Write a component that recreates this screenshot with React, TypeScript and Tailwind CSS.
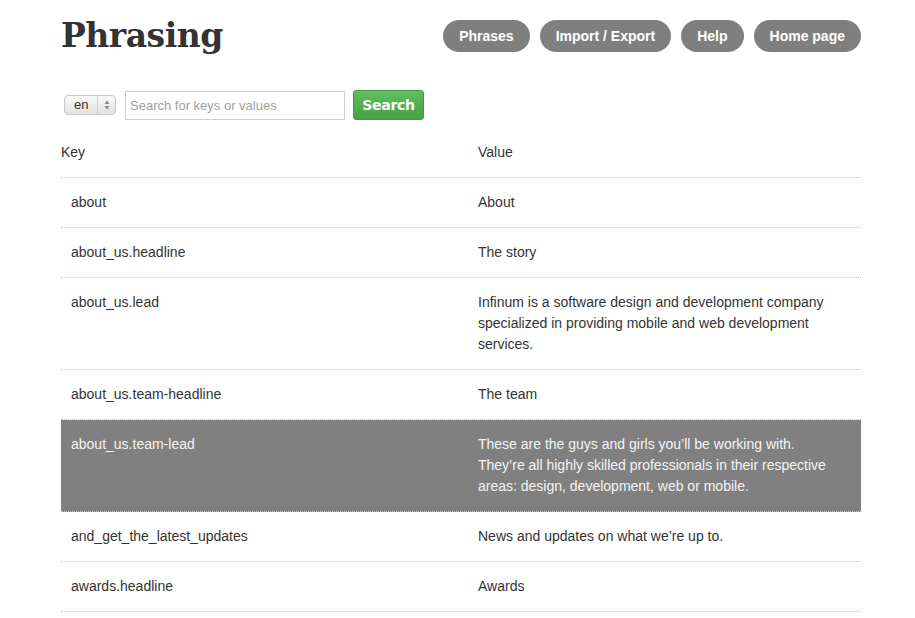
const navItems = ["Phrases", "Import / Export", "Help", "Home page"];

interface Phrase {
  key: string;
  value: string;
  active?: boolean;
}

const phrases: Phrase[] = [
  { key: "about", value: "About" },
  { key: "about_us.headline", value: "The story" },
  {
    key: "about_us.lead",
    value:
      "Infinum is a software design and development company specialized in providing mobile and web development services.",
  },
  { key: "about_us.team-headline", value: "The team" },
  {
    key: "about_us.team-lead",
    value:
      "These are the guys and girls you\u2019ll be working with. They\u2019re all highly skilled professionals in their respective areas: design, development, web or mobile.",
    active: true,
  },
  { key: "and_get_the_latest_updates", value: "News and updates on what we\u2019re up to." },
  { key: "awards.headline", value: "Awards" },
];

const PhraseRow = ({ phrase }: { phrase: Phrase }) => {
  return (
    <div
      className={`flex border-b border-dotted border-[#c4c4c4] py-[14px] text-[14px] leading-[21px] ${
        phrase.active ? "bg-[#808080] text-[#f4f4f4]" : "text-[#333]"
      }`}
    >
      <div className="w-[407px] pl-[10px]">{phrase.key}</div>
      <div className="w-[370px] pl-[10px]">{phrase.value}</div>
    </div>
  );
};

export default function App() {
  return (
    <div className="min-h-[618px] bg-white font-['Liberation_Sans',Arial,sans-serif]">
      <div className="ml-[61px] w-[800px]">
        {/* Header */}
        <header className="flex items-center justify-between pt-[14px]">
          <h1 className="font-['DejaVu_Serif',Georgia,serif] text-[33px] font-bold leading-[44px] tracking-[-0.5px] text-[#333]">
            Phrasing
          </h1>
          <nav className="flex gap-[10px]">
            {navItems.map((item) => (
              <a
                key={item}
                className="flex h-[32px] items-center rounded-full bg-[#7f7f7f] px-[16px] text-[14px] font-bold text-white"
              >
                {item}
              </a>
            ))}
          </nav>
        </header>

        {/* Search */}
        <div className="mt-[32px] flex items-center">
          <div className="ml-[3px] flex h-[20px] w-[52px] items-center rounded-[4px] border border-[#c8c8c8] bg-gradient-to-b from-[#f8f8f8] to-[#e2e2e2] text-[13px] text-[#333]">
            <span className="flex-1 pl-[9px]">en</span>
            <span className="flex h-full w-[18px] items-center justify-center border-l border-[#d0d0d0]">
              <svg width="6" height="10" viewBox="0 0 6 10">
                <path d="M3 0.5L5.5 4H0.5z" fill="#888" />
                <path d="M3 9.5L5.5 6H0.5z" fill="#888" />
              </svg>
            </span>
          </div>
          <input
            className="ml-[9px] h-[29px] w-[220px] border border-[#cfcfcf] px-[4px] text-[13px] text-[#333] placeholder:text-[#a0a0a0] focus:outline-none"
            placeholder="Search for keys or values"
          />
          <button className="ml-[8px] h-[30px] w-[71px] rounded-[3px] border border-[#3f9a3f] bg-gradient-to-b from-[#62bd5f] to-[#45a344] font-['DejaVu_Sans',sans-serif] text-[14px] font-bold tracking-[-0.3px] text-white">
            Search
          </button>
        </div>

        {/* Table */}
        <div className="mt-[8px]">
          <div className="flex border-b border-dotted border-[#c4c4c4] pb-[14px] pt-[14px] text-[14px] leading-[21px] text-[#333]">
            <div className="w-[417px]">Key</div>
            <div>Value</div>
          </div>
          {phrases.map((p) => (
            <PhraseRow key={p.key} phrase={p} />
          ))}
        </div>
      </div>
    </div>
  );
}
